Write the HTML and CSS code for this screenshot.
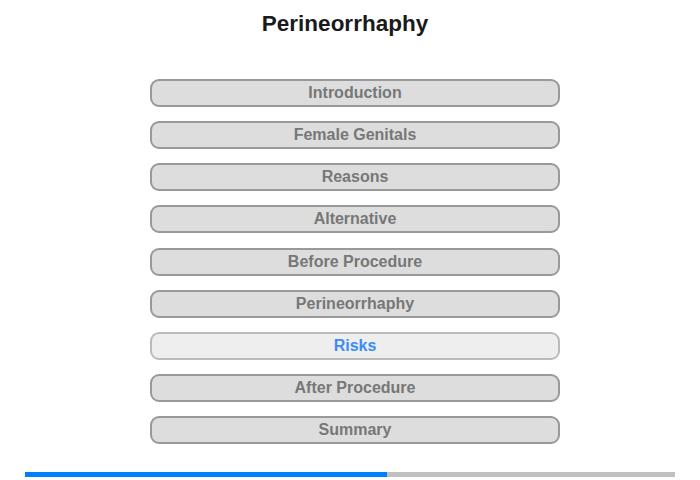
FILE: index.html
```html
<!DOCTYPE html>
<html>
<head>
<meta charset="utf-8">
<link rel="stylesheet" href="styles.css">
</head>
<body>
<div class="page">
  <h1 class="title">Perineorrhaphy</h1>
  <nav class="menu">
    <div class="item">Introduction</div>
    <div class="item">Female Genitals</div>
    <div class="item">Reasons</div>
    <div class="item">Alternative</div>
    <div class="item">Before Procedure</div>
    <div class="item">Perineorrhaphy</div>
    <div class="item active">Risks</div>
    <div class="item">After Procedure</div>
    <div class="item">Summary</div>
  </nav>
  <div class="progress"><div class="fill" style="width:362px"></div></div>
</div>
</body>
</html>
```
FILE: styles.css
```css
html, body { margin: 0; padding: 0; background: #fff; }
body { font-family: "Liberation Sans", Arial, sans-serif; width: 700px; height: 480px; overflow: hidden; }
.page { display: flex; flex-direction: column; }
.title {
  margin: 11px 0 0 0;
  padding-right: 10px;
  text-align: center;
  font-size: 22.5px;
  font-weight: bold;
  color: #1a1a1a;
  line-height: 26px;
}
.menu {
  display: flex;
  flex-direction: column;
  gap: 14.125px;
  margin: 42px 0 0 150px;
  width: 410px;
}
.item {
  box-sizing: border-box;
  height: 28px;
  border: 2px solid #999;
  border-radius: 9px;
  background: #ddd;
  color: #777;
  font-size: 16px;
  font-weight: bold;
  text-align: center;
  line-height: 24px;
}
.item.active {
  background: #eee;
  border-color: #bbb;
  color: #3b8cf5;
}
.progress {
  margin: 28px 0 0 25px;
  width: 650px;
  height: 5px;
  background: #c0c0c0;
}
.fill { height: 100%; background: #0080ff; }
```
